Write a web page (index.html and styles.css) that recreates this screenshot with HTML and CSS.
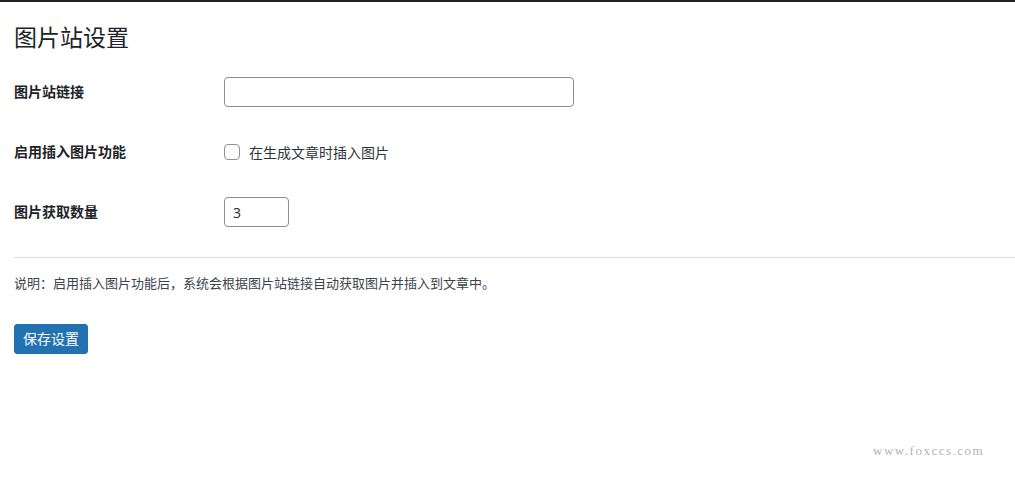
FILE: index.html
```html
<!DOCTYPE html>
<html lang="zh-CN">
<head>
<meta charset="utf-8">
<title>图片站设置</title>
<link rel="stylesheet" href="styles.css">
</head>
<body>
<div class="topbar"></div>
<div class="wrap">
  <h1 class="title">图片站设置</h1>
  <form class="form">
    <div class="row">
      <label class="th" for="site">图片站链接</label>
      <div class="td"><input id="site" class="input input-url" type="text"></div>
    </div>
    <div class="row">
      <div class="th">启用插入图片功能</div>
      <div class="td">
        <label class="check"><span class="box"></span><span>在生成文章时插入图片</span></label>
      </div>
    </div>
    <div class="row">
      <label class="th" for="num">图片获取数量</label>
      <div class="td"><input id="num" class="input input-num" type="text" value="3"></div>
    </div>
    <div class="divider"></div>
    <p class="desc">说明：启用插入图片功能后，系统会根据图片站链接自动获取图片并插入到文章中。</p>
    <button type="button" class="btn">保存设置</button>
  </form>
</div>
<div class="watermark">www.foxccs.com</div>
</body>
</html>
```
FILE: styles.css
```css
html, body {
  margin: 0;
  padding: 0;
  background: #ffffff;
  font-family: "Noto Sans", "Noto Sans CJK SC", sans-serif;
  color: #1d2327;
  font-size: 14px;
}
.topbar {
  height: 2px;
  background: #1d2327;
}
.wrap {
  padding-left: 14px;
}
.title {
  margin: 20px 0 10px 0;
  font-size: 23px;
  font-weight: 400;
  line-height: 30px;
  color: #1d2327;
}
.row {
  display: flex;
  align-items: center;
  height: 60px;
}
.th {
  width: 210px;
  flex: none;
  font-weight: 700;
  font-size: 14px;
  line-height: 20px;
}
.td {
  display: flex;
  align-items: center;
}
.input {
  box-sizing: border-box;
  height: 30px;
  border: 1px solid #8c8f94;
  border-radius: 4px;
  padding: 0 8px;
  font-family: "Noto Sans", "Noto Sans CJK SC", sans-serif;
  font-size: 14px;
  color: #2c3338;
  background: #fff;
  outline: none;
}
.input-url { width: 350px; }
.input-num { width: 65px; }
.check {
  display: flex;
  align-items: center;
  gap: 9px;
  font-size: 14px;
  color: #2c3338;
}
.box {
  box-sizing: border-box;
  width: 16px;
  height: 16px;
  border: 1px solid #8c8f94;
  border-radius: 4px;
  background: #fff;
}
.divider {
  height: 1px;
  background: #dcdcde;
  margin-top: 15px;
}
.desc {
  margin: 15px 0 0 0;
  font-size: 13px;
  line-height: 20px;
  color: #3c434a;
}
.btn {
  margin-top: 31px;
  box-sizing: border-box;
  height: 30px;
  padding: 0 8px;
  border: 1px solid #2271b1;
  border-radius: 3px;
  background: #2271b1;
  color: #fff;
  font-family: "Noto Sans", "Noto Sans CJK SC", sans-serif;
  font-size: 14px;
  line-height: 28px;
  cursor: pointer;
}
.watermark {
  position: absolute;
  left: 873px;
  top: 443px;
  font-family: "Liberation Serif", serif;
  font-size: 13px;
  letter-spacing: 1.5px;
  line-height: 16px;
  color: #b4b4b4;
}
```
